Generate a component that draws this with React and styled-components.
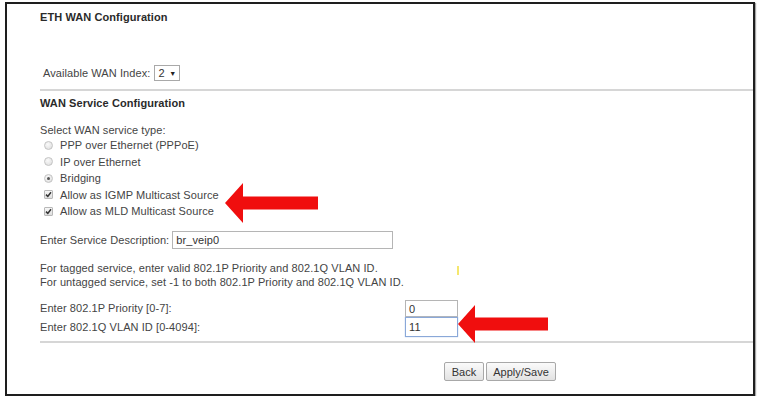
import React from "react";
import styled, { createGlobalStyle } from "styled-components";

const Global = createGlobalStyle`
  html, body { margin: 0; padding: 0; background: #fff; }
  body { font-family: "Liberation Sans", Arial, sans-serif; font-size: 11px; color: #444; letter-spacing: 0.08px; }
`;

const Frame = styled.div`
  position: relative;
  box-sizing: border-box;
  margin: 2px 0 0 5px;
  width: 750px;
  height: 394px;
  border: 2px solid #1e1e1e;
  box-shadow: 1px 1px 1px rgba(0, 0, 0, 0.35);
  background: #fff;
  padding-left: 33px;
  display: flex;
  flex-direction: column;
`;

const Title = styled.div`
  font-weight: bold;
  color: #2a2a2a;
  line-height: 13px;
  margin-top: ${(p) => p.$mt}px;
`;

const IndexRow = styled.div`
  display: flex;
  align-items: center;
  gap: 4px;
  height: 16px;
  margin-top: 41px;
  padding-left: 3px;
`;

const FakeSelect = styled.div`
  box-sizing: border-box;
  height: 16px;
  width: 26px;
  border: 1px solid #a9a9a9;
  display: flex;
  align-items: center;
  justify-content: space-between;
  padding: 0 3px 0 3px;
  color: #333;
  font-size: 11px;
`;

const Caret = styled.span`
  font-size: 7px;
  color: #222;
`;

const Rule = styled.div`
  margin-top: ${(p) => p.$mt}px;
  border-top: 2px solid #d6d6d6;
`;

const Label = styled.div`
  line-height: 13px;
  margin-top: 14px;
`;

const Options = styled.div`
  display: flex;
  flex-direction: column;
`;

const Option = styled.div`
  display: flex;
  align-items: center;
  height: 16.5px;
  padding-left: 4px;
  gap: 7px;
`;

const Radio = styled.span`
  box-sizing: border-box;
  width: 9px;
  height: 9px;
  border-radius: 50%;
  border: 1px solid #c4c4c4;
  background: radial-gradient(circle at 40% 35%, #fafafa 0%, #e4e4e4 70%, #d2d2d2 100%);
  display: flex;
  align-items: center;
  justify-content: center;
  &::after {
    content: "";
    width: 3px;
    height: 3px;
    border-radius: 50%;
    background: ${(p) => (p.$on ? "#555" : "transparent")};
  }
`;

const Check = styled.span`
  box-sizing: border-box;
  width: 9px;
  height: 9px;
  border: 1px solid #b8b8b8;
  border-radius: 1px;
  background: linear-gradient(#f7f7f7, #dedede);
  display: flex;
  align-items: center;
  justify-content: center;
`;

const FieldRow = styled.div`
  display: flex;
  align-items: center;
  gap: 3px;
  height: 18px;
  margin-top: 11.5px;
`;

const TextBox = styled.div`
  box-sizing: border-box;
  width: ${(p) => p.$w}px;
  height: ${(p) => p.$h}px;
  border: 1px solid ${(p) => (p.$focus ? "#8aa8d8" : "#b5b5b5")};
  box-shadow: ${(p) => (p.$focus ? "0 0 1px #9bb7e6" : "none")};
  padding: 0 3px;
  display: flex;
  align-items: center;
  color: #333;
  background: #fff;
`;

const Note = styled.div`
  line-height: 14px;
  margin-top: 12px;
`;

const VlanGrid = styled.div`
  display: grid;
  grid-template-columns: 365px auto;
  grid-template-rows: 17px 20px;
  align-items: center;
  margin-top: 11px;
`;

const VlanLabel = styled.div`
  line-height: 13px;
`;

const Buttons = styled.div`
  display: flex;
  gap: 2px;
  margin-top: 19px;
  padding-left: 404px;
`;

const Button = styled.div`
  box-sizing: border-box;
  width: ${(p) => p.$w}px;
  height: 19px;
  border: 1px solid #a8a8a8;
  border-radius: 2px;
  background: linear-gradient(#fbfbfb, #e2e2e2);
  display: flex;
  align-items: center;
  justify-content: center;
  color: #333;
  font-size: 11px;
  letter-spacing: 0;
`;

const ArrowSvg = styled.svg`
  position: absolute;
  left: ${(p) => p.$x}px;
  top: ${(p) => p.$y}px;
  filter: blur(0.4px);
`;

const Mark = styled.span`
  position: absolute;
  left: 450px;
  top: 262px;
  width: 2px;
  height: 9px;
  background: #f2e14a;
  opacity: 0.8;
`;

function CheckMark() {
  return (
    <Check>
      <svg width="7" height="7" viewBox="0 0 7 7">
        <path d="M1 3.6 L2.8 5.4 L6 1.2" fill="none" stroke="#333" strokeWidth="1.5" />
      </svg>
    </Check>
  );
}

function Arrow({ x, y, w, h, head }) {
  const mid = h / 2;
  const s1 = mid - 6.5;
  const s2 = mid + 6.5;
  const pts = `0,${mid} ${head},0 ${head},${s1} ${w},${s1} ${w},${s2} ${head},${s2} ${head},${h}`;
  return (
    <ArrowSvg $x={x} $y={y} width={w} height={h} viewBox={`0 0 ${w} ${h}`}>
      <polygon points={pts} fill="#f00e0e" />
    </ArrowSvg>
  );
}

export default function App() {
  return (
    <>
      <Global />
      <Frame>
        <Title $mt={7}>ETH WAN Configuration</Title>
        <IndexRow>
          <span>Available WAN Index:</span>
          <FakeSelect>
            <span>2</span>
            <Caret>▼</Caret>
          </FakeSelect>
        </IndexRow>
        <Rule $mt={8} />
        <Title $mt={6}>WAN Service Configuration</Title>
        <Label>Select WAN service type:</Label>
        <Options>
          <Option>
            <Radio />
            <span>PPP over Ethernet (PPPoE)</span>
          </Option>
          <Option>
            <Radio />
            <span>IP over Ethernet</span>
          </Option>
          <Option>
            <Radio $on />
            <span>Bridging</span>
          </Option>
          <Option>
            <CheckMark />
            <span>Allow as IGMP Multicast Source</span>
          </Option>
          <Option>
            <CheckMark />
            <span>Allow as MLD Multicast Source</span>
          </Option>
        </Options>
        <FieldRow>
          <span>Enter Service Description:</span>
          <TextBox $w={221} $h={18}>br_veip0</TextBox>
        </FieldRow>
        <Note>
          For tagged service, enter valid 802.1P Priority and 802.1Q VLAN ID.
          <br />
          For untagged service, set -1 to both 802.1P Priority and 802.1Q VLAN ID.
        </Note>
        <VlanGrid>
          <VlanLabel>Enter 802.1P Priority [0-7]:</VlanLabel>
          <TextBox $w={53} $h={17}>0</TextBox>
          <VlanLabel>Enter 802.1Q VLAN ID [0-4094]:</VlanLabel>
          <TextBox $w={53} $h={20} $focus>11</TextBox>
        </VlanGrid>
        <Rule $mt={4} />
        <Buttons>
          <Button $w={40}>Back</Button>
          <Button $w={70}>Apply/Save</Button>
        </Buttons>
        <Arrow x={218} y={179} w={93} h={40} head={18} />
        <Arrow x={451} y={301} w={90} h={38} head={17} />
        <Mark />
      </Frame>
    </>
  );
}
